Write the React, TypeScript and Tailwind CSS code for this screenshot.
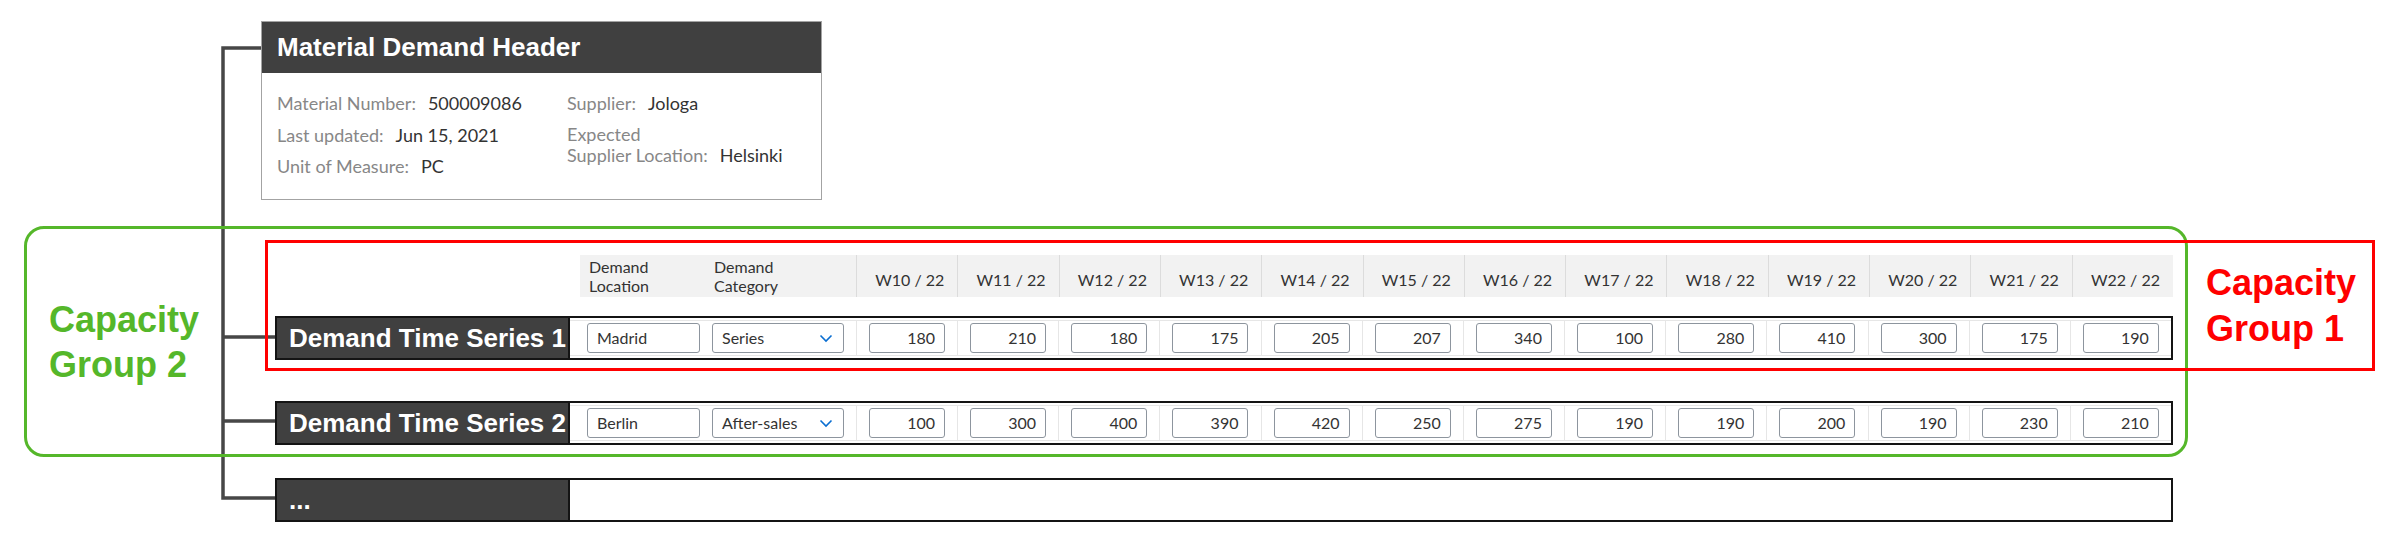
import React from 'react';

const weeks = ['W10', 'W11', 'W12', 'W13', 'W14', 'W15', 'W16', 'W17', 'W18', 'W19', 'W20', 'W21', 'W22'];

type Series = {
  label: string;
  location: string;
  category: string;
  values: number[];
};

const series: Series[] = [
  {
    label: 'Demand Time Series 1',
    location: 'Madrid',
    category: 'Series',
    values: [180, 210, 180, 175, 205, 207, 340, 100, 280, 410, 300, 175, 190],
  },
  {
    label: 'Demand Time Series 2',
    location: 'Berlin',
    category: 'After-sales',
    values: [100, 300, 400, 390, 420, 250, 275, 190, 190, 200, 190, 230, 210],
  },
];

const ui = "font-['Lato','Open_Sans',sans-serif]";
const bold = "font-['Liberation_Sans','Arial',sans-serif] font-bold";

const Field: React.FC<{ label: string; value: string; className?: string }> = ({ label, value, className }) => (
  <div className={`flex leading-[21px] ${className ?? ''}`}>
    <span className="text-[#878787]">{label}</span>
    <span className="ml-[12px] text-[#333]">{value}</span>
  </div>
);

const Chevron = () => (
  <svg width="14" height="9" viewBox="0 0 14 9" fill="none">
    <polyline points="1.5,1.5 7,7 12.5,1.5" stroke="#0a6ed1" strokeWidth="1.6" />
  </svg>
);

const Box: React.FC<{ children?: React.ReactNode; className?: string }> = ({ children, className }) => (
  <div className={`flex h-[30px] items-center rounded-[3px] border border-[#8d959e] bg-white text-[16px] text-[#333] ${className ?? ''}`}>
    {children}
  </div>
);

const RowShell: React.FC<{ label: string; mt: string; children?: React.ReactNode }> = ({ label, mt, children }) => (
  <div className={`ml-[275px] flex h-[44px] w-[1898px] border-2 border-[#141414] ${mt}`}>
    <div className={`flex w-[291px] shrink-0 items-center bg-[#404040] pl-[12px] text-[26px] text-white ${bold}`}>
      {label}
    </div>
    <div className="flex flex-1 border-l-2 border-[#141414] bg-white py-[2px]">
      {children}
    </div>
  </div>
);

const SeriesRow: React.FC<{ s: Series; mt: string }> = ({ s, mt }) => (
  <RowShell label={s.label} mt={mt}>
    <div className={`flex flex-1 border-y border-[#e6e6e6] pl-[10px] ${ui}`}>
      <div className="flex w-[125px] items-center pl-[7px]">
        <Box className="w-[113px] pl-[9px]">{s.location}</Box>
      </div>
      <div className="flex w-[151px] items-center pl-[7px]">
        <Box className="w-[132px] justify-between pl-[9px] pr-[10px]">
          <span>{s.category}</span>
          <Chevron />
        </Box>
      </div>
      <div className="grid flex-1 grid-cols-[repeat(13,1fr)]">
        {s.values.map((v, i) => (
          <div key={i} className="flex items-center border-l border-[#e6e6e6] pl-[12px]">
            <Box className="w-[76px] justify-end pr-[9px]">{v}</Box>
          </div>
        ))}
      </div>
    </div>
  </RowShell>
);

export default function App() {
  return (
    <div className="relative h-[542px] w-[2399px] overflow-hidden bg-white pt-[21px]">
      {/* tree connectors */}
      <svg className="pointer-events-none absolute left-0 top-0" width="2399" height="542">
        <path d="M262 48 H223 V498 H276 M223 337 H276 M223 421 H276" stroke="#474747" strokeWidth="3.5" fill="none" />
      </svg>

      {/* header card */}
      <div className="relative ml-[261px] w-[561px] border border-[#a3a3a3] bg-white">
        <div className={`flex h-[51px] items-center bg-[#404040] pl-[15px] text-[26px] text-white ${bold}`}>
          Material Demand Header
        </div>
        <div className={`flex h-[126px] pl-[15px] pt-[20px] text-[18px] ${ui}`}>
          <div className="flex w-[290px] flex-col gap-[10.5px]">
            <Field label="Material Number:" value="500009086" />
            <Field label="Last updated:" value="Jun 15, 2021" />
            <Field label="Unit of Measure:" value="PC" />
          </div>
          <div className="flex flex-col gap-[10px]">
            <Field label="Supplier:" value="Jologa" />
            <div className="flex items-end leading-[21px]">
              <span className="text-[#878787]">
                Expected
                <br />
                Supplier Location:
              </span>
              <span className="ml-[12px] text-[#333]">Helsinki</span>
            </div>
          </div>
        </div>
      </div>

      {/* column headers */}
      <div className={`relative ml-[580px] mt-[55px] flex h-[42px] w-[1593px] bg-[#f2f2f2] text-[16px] leading-[19px] text-[#333] ${ui}`}>
        <div className="flex w-[125px] items-center pl-[9px]">
          Demand
          <br />
          Location
        </div>
        <div className="flex w-[151px] items-center pl-[9px]">
          Demand
          <br />
          Category
        </div>
        <div className="grid flex-1 grid-cols-[repeat(13,1fr)]">
          {weeks.map((w) => (
            <div key={w} className="flex items-end justify-end border-l border-[#dcdcdc] pb-[8px] pr-[13px]">
              {w} / 22
            </div>
          ))}
        </div>
      </div>

      <div className="relative">
        <SeriesRow s={series[0]} mt="mt-[19px]" />
        <SeriesRow s={series[1]} mt="mt-[41px]" />
        <RowShell label="..." mt="mt-[33px]" />
      </div>

      {/* capacity group 2 (green) */}
      <div className="pointer-events-none absolute left-[24px] top-[226px] flex h-[231px] w-[2164px] items-center rounded-[20px] border-[3.5px] border-[#55b72a] pl-[22px]">
        <div className={`text-[36px] leading-[45px] text-[#55b72a] ${bold}`}>
          Capacity
          <br />
          Group 2
        </div>
      </div>

      {/* capacity group 1 (red) */}
      <div className="pointer-events-none absolute left-[265px] top-[240px] flex h-[131px] w-[2110px] items-center justify-end border-[3.5px] border-[#ff0000] pr-[16px]">
        <div className={`text-[36px] leading-[46px] text-[#ff0000] ${bold}`}>
          Capacity
          <br />
          Group 1
        </div>
      </div>
    </div>
  );
}
